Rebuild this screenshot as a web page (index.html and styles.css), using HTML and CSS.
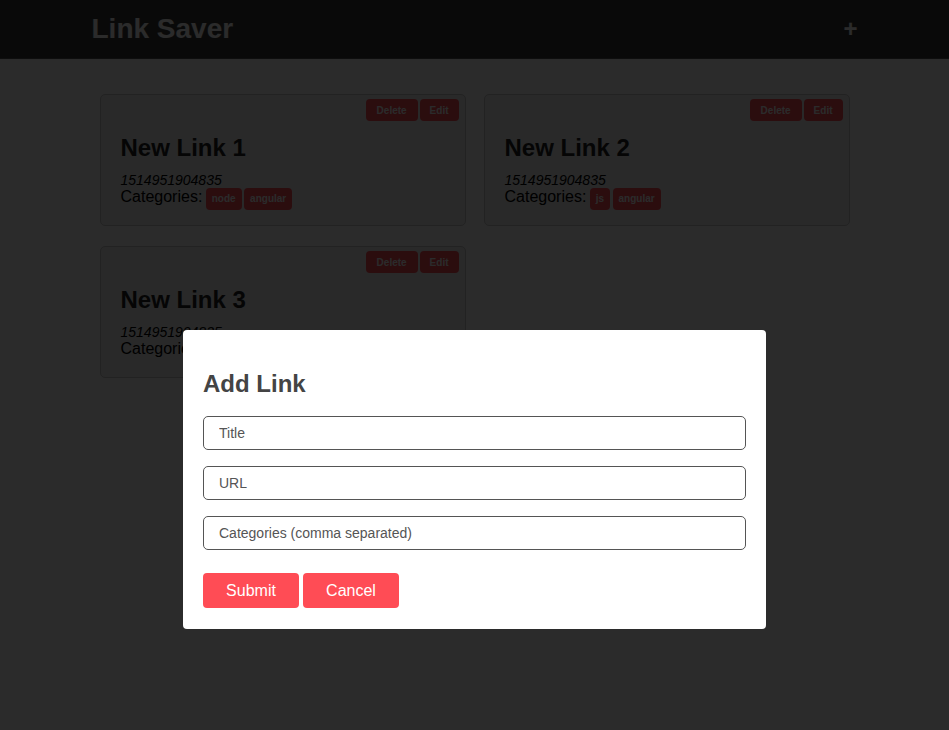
FILE: index.html
```html
<!DOCTYPE html>
<html>
<head>
<meta charset="utf-8">
<title>Link Saver</title>
<link rel="stylesheet" href="styles.css">
</head>
<body>
<header class="topbar">
  <div class="container topbar-inner">
    <h1 class="brand">Link Saver</h1>
    <button class="add-btn">+</button>
  </div>
</header>
<main class="container links">
  <article class="card">
    <div class="card-actions"><button class="btn-sm">Delete</button><button class="btn-sm">Edit</button></div>
    <h2 class="card-title">New Link 1</h2>
    <p class="stamp">1514951904835</p>
    <p class="cats">Categories: <span class="tag">node</span> <span class="tag">angular</span></p>
  </article>
  <article class="card">
    <div class="card-actions"><button class="btn-sm">Delete</button><button class="btn-sm">Edit</button></div>
    <h2 class="card-title">New Link 2</h2>
    <p class="stamp">1514951904835</p>
    <p class="cats">Categories: <span class="tag">js</span> <span class="tag">angular</span></p>
  </article>
  <article class="card">
    <div class="card-actions"><button class="btn-sm">Delete</button><button class="btn-sm">Edit</button></div>
    <h2 class="card-title">New Link 3</h2>
    <p class="stamp">1514951904835</p>
    <p class="cats">Categories: <span class="tag">react</span></p>
  </article>
</main>
<div class="overlay"></div>
<div class="modal">
  <h2 class="modal-title">Add Link</h2>
  <input class="field" type="text" placeholder="Title">
  <input class="field" type="text" placeholder="URL">
  <input class="field" type="text" placeholder="Categories (comma separated)">
  <div class="modal-actions">
    <button class="btn">Submit</button>
    <button class="btn">Cancel</button>
  </div>
</div>
</body>
</html>
```

FILE: styles.css
```css
* { box-sizing: border-box; }
html, body { margin: 0; padding: 0; }
body {
  font-family: "Liberation Sans", Arial, Helvetica, sans-serif;
  background: #fff;
  color: #000;
  height: 730px;
  overflow: hidden;
}
.container {
  width: 768px;
  margin: 0 auto;
}
.topbar {
  background: #3a3a3a;
  height: 59px;
  border-bottom: 1px solid #555;
}
.topbar-inner {
  display: flex;
  align-items: center;
  justify-content: space-between;
  height: 58px;
  padding-left: 1px;
}
.brand {
  margin: 0;
  font-size: 28px;
  font-weight: bold;
  color: #fff;
}
.add-btn {
  background: none;
  border: none;
  color: #fff;
  font-family: inherit;
  font-size: 24px;
  font-weight: bold;
  padding: 0;
  margin-right: 1px;
  cursor: pointer;
}
.links {
  display: flex;
  flex-wrap: wrap;
  padding-top: 25px;
}
.card {
  width: 366px;
  height: 132px;
  margin: 10px 9px;
  background: #f0f0f0;
  border: 1px solid #c8c8c8;
  border-radius: 5px;
  padding: 4px 6px 0 20px;
}
.card-actions {
  display: flex;
  justify-content: flex-end;
  gap: 2px;
}
.btn-sm {
  background: #ff4c55;
  color: #fff;
  border: none;
  border-radius: 4px;
  font-family: inherit;
  font-size: 10px;
  font-weight: bold;
  height: 22px;
  padding: 0 11px;
}
.btn-sm:last-child { padding: 0 10px; }
.card-title {
  margin: 13px 0 0;
  font-size: 24px;
  line-height: 28px;
  font-weight: bold;
  color: #222;
}
.stamp {
  margin: 10px 0 0;
  font-size: 14px;
  font-style: italic;
  line-height: 16px;
}
.cats {
  margin: 0;
  font-size: 16px;
  line-height: 18px;
}
.tag {
  display: inline-block;
  background: #ff4c55;
  color: #fff;
  font-size: 10px;
  font-weight: bold;
  border-radius: 4px;
  padding: 5px 6px 6px;
  line-height: 11px;
  margin-left: -1px;
  margin-right: -1px;
}
.overlay {
  position: fixed;
  inset: 0;
  background: rgba(0, 0, 0, 0.83);
}
.modal {
  position: absolute;
  top: 330px;
  left: 183px;
  width: 583px;
  height: 299px;
  background: #fff;
  border-radius: 4px;
  padding: 20px 20px 0;
  display: flex;
  flex-direction: column;
}
.modal-title {
  margin: 20px 0 18px;
  font-size: 24px;
  line-height: 28px;
  font-weight: bold;
  color: #444;
}
.field {
  width: 543px;
  height: 34px;
  border: 1px solid #555;
  border-radius: 5px;
  padding: 0 15px;
  font-family: inherit;
  font-size: 14px;
  color: #333;
  margin-bottom: 16px;
  outline: none;
}
.field::placeholder { color: #555; opacity: 1; }
.modal-actions {
  display: flex;
  gap: 4px;
  margin-top: 7px;
}
.btn {
  width: 96px;
  height: 35px;
  background: #ff4c55;
  color: #fff;
  border: none;
  border-radius: 4px;
  font-family: inherit;
  font-size: 16px;
  padding: 0;
}
```
